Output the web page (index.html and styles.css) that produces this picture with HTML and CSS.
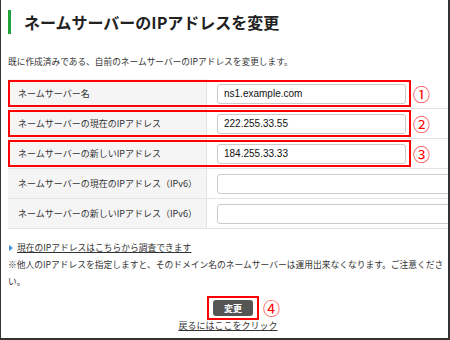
FILE: index.html
```html
<!DOCTYPE html>
<html lang="ja">
<head>
    <meta charset="UTF-8">
    <meta name="viewport" content="width=device-width, initial-scale=1.0">
    <link rel="stylesheet" href="styles.css">
    <title>ネームサーバーのIPアドレスを変更</title>
</head>
<body>
    <div class="frame">

        <h1 class="title">ネームサーバーのIPアドレスを変更</h1>
        <p class="lead">既に作成済みである、自前のネームサーバーのIPアドレスを変更します。</p>

        <div class="form">
            <div class="row">
                <div class="label">ネームサーバー名</div>
                <div class="field"><input type="text" value="ns1.example.com"></div>
                <span class="mark"></span>
                <span class="num">①</span>
            </div>
            <div class="row">
                <div class="label">ネームサーバーの現在のIPアドレス</div>
                <div class="field"><input type="text" value="222.255.33.55"></div>
                <span class="mark"></span>
                <span class="num">②</span>
            </div>
            <div class="row">
                <div class="label">ネームサーバーの新しいIPアドレス</div>
                <div class="field"><input type="text" value="184.255.33.33"></div>
                <span class="mark"></span>
                <span class="num">③</span>
            </div>
            <div class="row wide">
                <div class="label">ネームサーバーの現在のIPアドレス（IPv6）</div>
                <div class="field"><input type="text" value=""></div>
            </div>
            <div class="row wide">
                <div class="label">ネームサーバーの新しいIPアドレス（IPv6）</div>
                <div class="field"><input type="text" value=""></div>
            </div>
        </div>

        <div class="notes">
            <p class="arrow"><a href="#">現在のIPアドレスはこちらから調査できます</a></p>
            <p>※他人のIPアドレスを指定しますと、そのドメイン名のネームサーバーは運用出来なくなります。ご注意ください。</p>
        </div>

        <div class="actions">
            <div class="btn-wrap">
                <button class="btn" type="button">変更</button>
                <span class="mark"></span>
                <span class="num">④</span>
            </div>
        </div>
        <a href="#" class="back">戻るにはここをクリック</a>

    </div>
</body>
</html>
```

FILE: styles.css
```css
*{
    margin: 0;
    padding: 0;
    box-sizing: border-box;
}

body{
    font-family: "Noto Sans CJK JP", sans-serif;
    color: #333;
    background: #fff;
}

.frame{
    width: 450px;
    height: 340px;
    border: solid #333;
    border-width: 0 2px 2px 1px;
    padding-left: 7px;
    overflow: hidden;
}

.title{
    margin-top: 10px;
    height: 24px;
    border-left: 3px solid #1ea43a;
    padding-left: 13px;
    font-size: 16px;
    font-weight: bold;
    line-height: 24px;
    color: #222;
}

.lead{
    margin-top: 20px;
    font-size: 8.7px;
    line-height: 16px;
}

.form{
    margin-top: 9px;
}

.row{
    position: relative;
    display: grid;
    grid-template-columns: 199px 1fr;
    height: 30px;
    border-bottom: 1px solid #e3e3e3;
}

.label{
    background: #f5f5f5;
    border-right: 1px solid #e3e3e3;
    padding-left: 10px;
    display: flex;
    align-items: center;
    font-size: 9px;
}

.field{
    padding-left: 10px;
    display: flex;
    align-items: center;
    overflow: hidden;
}

.field input{
    flex-shrink: 0;
    width: 189px;
    height: 20px;
    border: 1px solid #ccc;
    border-radius: 3px;
    padding: 0 6px;
    font-family: "Liberation Sans", sans-serif;
    font-size: 10px;
    color: #111;
}

.wide .field input{
    width: 260px;
}

/* annotations */
.mark{
    position: absolute;
    left: 0;
    top: 1px;
    width: 403px;
    height: 27px;
    border: 2px solid #f00;
    pointer-events: none;
}

.num{
    position: absolute;
    left: 405px;
    top: 0;
    line-height: 30px;
    font-size: 17px;
    color: #f00;
}

.notes{
    margin-top: 10px;
    font-size: 8.75px;
    line-height: 17px;
}

.notes a{
    color: #333;
}

.arrow{
    padding-left: 9px;
    position: relative;
}

.arrow::before{
    content: "";
    position: absolute;
    left: 1px;
    top: 6px;
    border: 3px solid transparent;
    border-left: 4px solid #3b8fd6;
}

.actions{
    margin-top: 10px;
    display: flex;
    justify-content: center;
}

.btn-wrap{
    position: relative;
    margin-left: 10px;
}

.btn{
    display: block;
    width: 40px;
    height: 16px;
    background: #555;
    color: #fff;
    border: none;
    border-radius: 3px;
    font-family: "Noto Sans CJK JP", sans-serif;
    font-size: 9px;
    font-weight: bold;
}

.btn-wrap .mark{
    left: -6px;
    top: -4px;
    width: 52px;
    height: 24px;
}

.btn-wrap .num{
    left: 50px;
    top: -7px;
}

.back{
    display: block;
    margin-top: 3px;
    text-align: center;
    font-size: 9px;
    line-height: 14px;
    color: #333;
}
```
